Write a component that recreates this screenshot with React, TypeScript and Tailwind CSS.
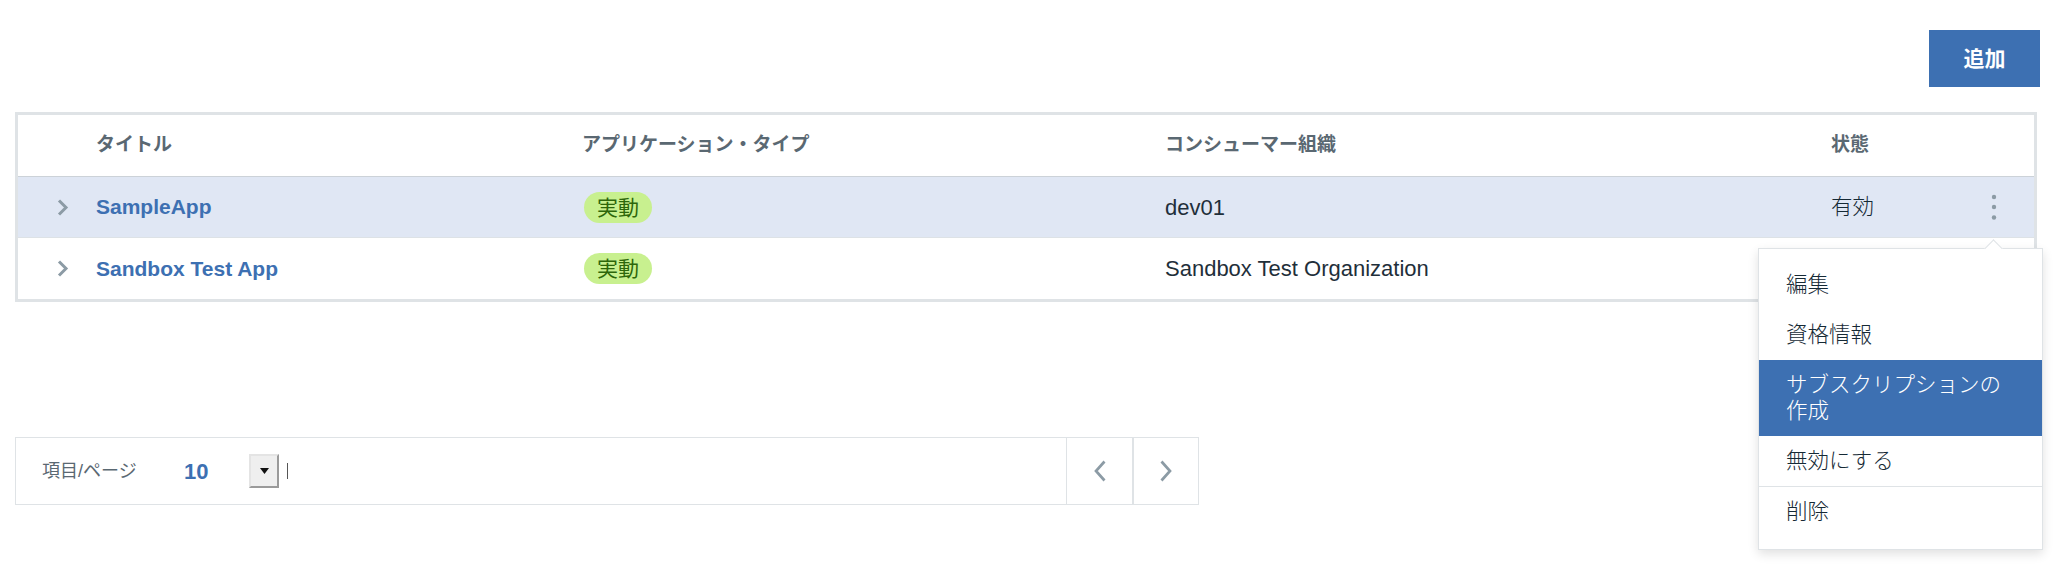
import React from "react";

const FONT = "font-['Liberation_Sans','Noto_Sans_CJK_JP',sans-serif]";

function Chevron() {
  return (
    <svg width="12" height="17" viewBox="0 0 12 17" fill="none">
      <path d="M2 1.5 L9 8.5 L2 15.5" stroke="#8c9ba5" strokeWidth="3" />
    </svg>
  );
}

function Dots() {
  return (
    <svg width="6" height="26" viewBox="0 0 6 26">
      <circle cx="3" cy="3" r="2.2" fill="#8c9ba5" />
      <circle cx="3" cy="13" r="2.2" fill="#8c9ba5" />
      <circle cx="3" cy="23.5" r="2.2" fill="#8c9ba5" />
    </svg>
  );
}

function Badge() {
  return (
    <span className="inline-flex items-center h-[31px] px-[13px] rounded-full bg-[#c8f08f] text-[#2d660a] text-[21px] leading-none">
      実動
    </span>
  );
}

const rows = [
  { title: "SampleApp", org: "dev01", status: "有効", active: true },
  { title: "Sandbox Test App", org: "Sandbox Test Organization", status: "", active: false },
];

export default function App() {
  return (
    <div className={`w-[2070px] h-[572px] bg-white ${FONT} overflow-hidden`}>
      <div className="flex justify-end pt-[30px] pr-[30px]">
        <button className="w-[111px] h-[57px] bg-[#3d70b2] text-white text-[21px] font-semibold">
          追加
        </button>
      </div>

      <div className="relative mt-[25px] ml-[15px] w-[2022px] border-[3px] border-[#dfe3e6]">
        <div className="grid grid-cols-[78px_486px_583px_666px_1fr] h-[62px] border-b border-[#ccd2d8] items-center text-[19px] font-semibold text-[#5a6872]">
          <div />
          <div>タイトル</div>
          <div>アプリケーション・タイプ</div>
          <div>コンシューマー組織</div>
          <div>状態</div>
        </div>
        {rows.map((r, i) => (
          <div
            key={r.title}
            className={`grid grid-cols-[78px_486px_583px_666px_1fr] h-[61px] items-center ${
              r.active ? "bg-[#e0e7f4]" : "bg-white"
            } ${i === 0 ? "border-b border-[#dde2e6]" : ""}`}
          >
            <div className="pl-[39px] flex items-center">
              <Chevron />
            </div>
            <div className="text-[21px] font-bold text-[#3d70b2]">{r.title}</div>
            <div className="pl-[2px]">
              <Badge />
            </div>
            <div className="text-[22px] font-light text-[#1f2f3a]">{r.org}</div>
            <div className="flex items-center justify-between pr-[37px]">
              <span className="text-[21.5px] font-light text-[#152935]">{r.status}</span>
              {r.active && <Dots />}
            </div>
          </div>
        ))}

        <div className="absolute left-[1740px] top-[133px] z-10 w-[285px] bg-white border border-[#dfe3e6] shadow-[0_4px_10px_rgba(0,0,0,0.12)] pt-[11px] pb-[12px] text-[21.5px] leading-[26px] text-[#152935] font-light">
          <div className="absolute left-[228px] top-[-7px] w-[13px] h-[13px] rotate-45 bg-white border-t border-l border-[#dfe3e6]" />
          <div className="relative px-[27px] py-[12px]">編集</div>
          <div className="px-[27px] py-[12px]">資格情報</div>
          <div className="px-[27px] pr-[20px] py-[12px] bg-[#3d70b2] text-white">
            サブスクリプションの作成
          </div>
          <div className="px-[27px] py-[12px] border-b border-[#dfe3e6]">無効にする</div>
          <div className="px-[27px] py-[12px]">削除</div>
        </div>
      </div>

      <div className="mt-[135px] ml-[15px] w-[1184px] h-[68px] border border-[#dfe3e6] flex items-stretch">
        <div className="flex-1 flex items-center pl-[26px]">
          <span className="w-[142px] text-[18px] text-[#5a6872]">項目/ページ</span>
          <span className="w-[65px] text-[22px] font-bold text-[#3d70b2]">10</span>
          <span className="w-[30px] h-[34px] bg-[#efefef] border-2 border-t-[#e4e4e4] border-l-[#e4e4e4] border-r-[#9a9a9a] border-b-[#9a9a9a] flex items-center justify-center">
            <svg width="9" height="6" viewBox="0 0 9 6">
              <polygon points="0,0 9,0 4.5,6" fill="#111" />
            </svg>
          </span>
          <span className="ml-[8px] w-px h-[16px] bg-[#555]" />
        </div>
        <div className="w-[66px] border-l border-[#dfe3e6] flex items-center justify-center">
          <svg width="12" height="22" viewBox="0 0 12 22" fill="none">
            <path d="M10.5 1.5 L2 11 L10.5 20.5" stroke="#8c9ba5" strokeWidth="2.7" />
          </svg>
        </div>
        <div className="w-[66px] border-l-2 border-[#dfe3e6] flex items-center justify-center">
          <svg width="12" height="22" viewBox="0 0 12 22" fill="none">
            <path d="M1.5 1.5 L10 11 L1.5 20.5" stroke="#8c9ba5" strokeWidth="2.7" />
          </svg>
        </div>
      </div>
    </div>
  );
}
